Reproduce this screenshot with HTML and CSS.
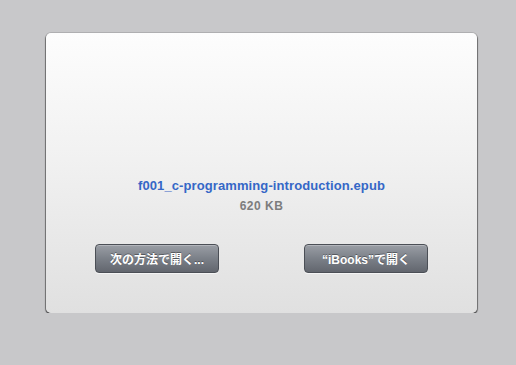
FILE: index.html
```html
<!DOCTYPE html>
<html>
    <head>
        <meta charset="utf-8" />
        <title>f001_c-programming-introduction.epub</title>
        <link rel="stylesheet" href="styles.css">
    </head>
    <body>
        <!-- ファイルのプレビュー -->
        <div class="panel">
            <div class="file-info">
                <div class="file-name">f001_c-programming-introduction.epub</div>
                <div class="file-size">620 KB</div>
            </div>

            <!-- 下部のボタン -->
            <div class="panel-buttons">
                <button type="button" class="button">次の方法で開く...</button>
                <button type="button" class="button">“iBooks”で開く</button>
            </div>
        </div>
    </body>
</html>
```

FILE: styles.css
```css
/* 背景 */
body {
    margin: 0;
    padding: 33px 0 0 46px;
    background-color: #c8c8ca;
    font-family: "Liberation Sans", Arial, "Noto Sans CJK JP", sans-serif;
}

/* パネル本体 */
.panel {
    width: 431px;
    height: 280px;
    box-sizing: border-box;
    display: flex;
    flex-direction: column;
    border-radius: 5px;
    background: linear-gradient(to bottom, #fdfdfd 0%, #f1f1f1 45%, #e0e0e0 100%);
    box-shadow: 0 0 0 1px rgba(0, 0, 0, 0.12), -1px 1px 1px rgba(0, 0, 0, 0.35), 1px 1px 1px rgba(0, 0, 0, 0.35), 0 2px 1px rgba(0, 0, 0, 0.3);
    padding-top: 145px;
}

.file-info {
    text-align: center;
    font-weight: bold;
}

.file-name {
    font-size: 13px;
    line-height: 15px;
    letter-spacing: 0.1px;
    color: #3567c7;
}

.file-size {
    margin-top: 6px;
    font-size: 12px;
    line-height: 14px;
    letter-spacing: 0.5px;
    color: #7d7d7d;
}

/* ボタン配置 */
.panel-buttons {
    display: flex;
    justify-content: space-between;
    padding: 0 49px;
    margin-top: 31px;
}

.button {
    width: 124px;
    height: 29px;
    box-sizing: border-box;
    border: 1px solid #4b4f56;
    border-radius: 4px;
    background: linear-gradient(to bottom, #9a9ea5 0%, #7b8088 50%, #62666e 100%);
    box-shadow: inset 0 1px 0 rgba(255, 255, 255, 0.25), 0 1px 0 rgba(255, 255, 255, 0.6);
    color: white;
    font-family: "Liberation Sans", Arial, "Noto Sans CJK JP", sans-serif;
    font-size: 12px;
    font-weight: bold;
    text-shadow: 0 -1px 0 rgba(0, 0, 0, 0.35);
    padding: 0;
}
```
